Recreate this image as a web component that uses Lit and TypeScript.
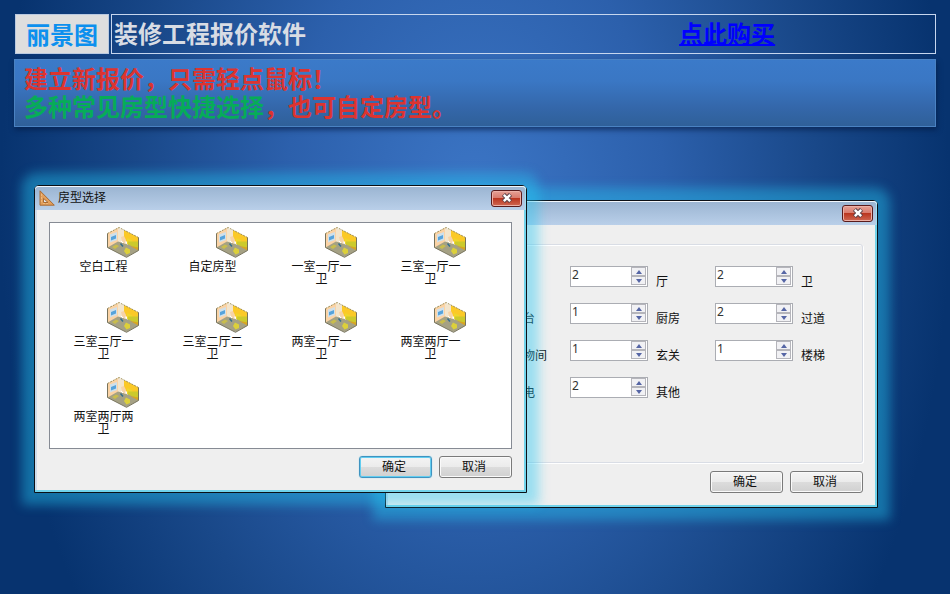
import { LitElement, html, css, nothing } from "lit";
import { customElement, property } from "lit/decorators.js";
import { classMap } from "lit/directives/class-map.js";

const ROOM_TYPES = [
  "空白工程",
  "自定房型",
  "一室一厅一卫",
  "三室一厅一卫",
  "三室二厅一卫",
  "三室二厅二卫",
  "两室一厅一卫",
  "两室两厅一卫",
  "两室两厅两卫",
];

const ROOM_COUNTS = [
  { label: "室", value: 2 },
  { label: "厅", value: 2 },
  { label: "卫", value: 2 },
  { label: "阳台", value: 1 },
  { label: "厨房", value: 1 },
  { label: "过道", value: 2 },
  { label: "储物间", value: 1 },
  { label: "玄关", value: 1 },
  { label: "楼梯", value: 1 },
  { label: "水电", value: 1 },
  { label: "其他", value: 2 },
];

const roomIcon = html`<svg class="room" viewBox="0 0 32 31" width="32" height="31" aria-hidden="true">
  <path d="M0.5 6.5 12 0.5 12 15 0.5 21Z" fill="#fbd3a5" />
  <path d="M11 1 18 4 18 17 11 15Z" fill="#f3e5cc" />
  <path d="M17 3 31.5 10.5 31.5 16 20 15 17 12Z" fill="#fbc927" />
  <path d="M20 11 25 13 26 19 20 17Z" fill="#f0d62c" />
  <path d="M21 14.500 31.5 14.500 31.5 21.500 21 18.500Z" fill="#ccca2c" />
  <path d="M0.5 20.5 11 14.5 18 16.5 31.5 21.5 31.5 23.5 19.5 30Z" fill="#a5a184" />
  <path d="M23 19 31.5 20.500 31.5 23.5Z" fill="#d9a520" />
  <path d="M3 7.500 10 5 10 13 3 15.500Z" fill="#cfe0ea" />
  <path d="M4 10 9 8 9 11.500 4 13.500Z" fill="#56a3dc" />
  <path d="M14 10 17 9 19 13 18 17 15 14Z" fill="#f6d3a8" />
  <path d="M13.5 16.500 16 19.500" stroke="#356f8d" stroke-width="1.500" />
  <path d="M14 14 16 16" stroke="#fff" stroke-width="1" />
  <path d="M5 20 9 17.5 12 19 8 22Z" fill="#c9bd4c" />
  <path d="M17 24 19 20.5 23 22.5 23 26 19.5 27.5Z" fill="#dcd03a" />
  <path d="M0.5 6.5 12 0.5 31.5 10.5" fill="none" stroke="#a08f55" stroke-dasharray="2 1" />
  <path d="M0.5 6.5V20.5L19.5 30.3 31.5 23.5V10.5" fill="none" stroke="#77735c" />
</svg>`;

const rulerIcon = html`<svg class="ruler" viewBox="0 0 16 16" width="16" height="16" aria-hidden="true">
  <path d="M1 .8 15.3 15.2H1Z" fill="#e3a05d" stroke="#a86b35" stroke-width="1" />
  <path d="M4.5 8.3 9 12.5H4.5Z" fill="#dfe6ee" stroke="#a86b35" />
  <path d="M2 5h1M2 8h1M2 11h1M5 14v-1M8 14v-1" stroke="#f8d2a0" />
</svg>`;

const controls = css`
  button {
    font: inherit;
    color: inherit;
    margin: 0;
    padding: 0;
  }
  .push {
    width: 73px;
    height: 22px;
    padding-right: 3px;
    border: 1px solid #7a7a7a;
    border-radius: 3px;
    background: linear-gradient(#f4f4f4, #ebebeb 50%, #dcdcdc 51%, #d0d0d0);
    box-shadow: inset 0 0 0 1px #fafafa;
    line-height: 18px;
  }
  .push.primary {
    border-color: #3f93c0;
    box-shadow: inset 0 0 0 1px #62cdf0, 0 0 1px #62cdf0;
  }
`;

@customElement("dialog-window")
class DialogWindow extends LitElement {
  @property() heading = "";

  static styles = css`
    :host {
      display: block;
      box-sizing: border-box;
      border: 1px solid #0b1016;
      border-radius: 5px 5px 0 0;
      background: #efefef;
      box-shadow: 0 0 11px 12px rgba(38, 200, 242, 0.42);
    }
    .frame {
      border-radius: 4px 4px 0 0;
      box-shadow: inset -2px -2px 0 #72d3ea, inset 2px 0 0 #cfdcea;
      padding-bottom: 14px;
    }
    .title {
      display: flex;
      align-items: center;
      gap: 3px;
      height: 24px;
      padding: 0 4px;
      border-radius: 4px 4px 0 0;
      background: linear-gradient(#9ab4d1, #b9cfe9);
      box-shadow: inset 0 1px 0 #f2f7fc, inset -1px 0 0 #9be0f2;
    }
    .text {
      flex: 1;
      font-size: 12px;
      line-height: 16px;
    }
    .ruler {
      display: block;
    }
    .close {
      display: grid;
      place-items: center;
      width: 31px;
      height: 17px;
      padding: 0;
      border: 1px solid #591b1c;
      border-radius: 3px;
      background: linear-gradient(#e5a196, #d9796b 48%, #bb3620 50%, #cf6752);
      box-shadow: inset 0 0 0 1px #ecb0a6;
    }
    .body {
      padding: 0 14px;
    }
  `;

  render() {
    return html`<section class="frame">
      <header class="title">
        ${this.heading ? rulerIcon : nothing}
        <span class="text">${this.heading}</span>
        <button class="close" aria-label="关闭">
          <svg viewBox="0 0 12 10" width="12" height="10" aria-hidden="true">
            <path d="M2.5 1.5 9.5 8.5M9.5 1.5 2.5 8.5" stroke="#5b4249" stroke-width="4.4" />
            <path d="M2.8 1.8 9.2 8.2M9.2 1.8 2.8 8.2" stroke="#fff" stroke-width="2.4" />
          </svg>
        </button>
      </header>
      <div class="body"><slot></slot></div>
    </section>`;
  }
}

@customElement("count-field")
class CountField extends LitElement {
  @property() label = "";
  @property({ type: Number }) value = 0;

  static styles = css`
    :host {
      display: flex;
      gap: 8px;
      height: 22px;
    }
    .box {
      display: flex;
      box-sizing: border-box;
      width: 78px;
      height: 21px;
      border: 1px solid #abadb3;
      background: #fff;
    }
    .value {
      flex: 1;
      min-width: 0;
      height: 16px;
      padding: 0 1px;
      border: 0;
      outline: 0;
      background: none;
      font: 12px/16px "Noto Sans", sans-serif;
      color: #333;
    }
    .spin {
      display: grid;
      grid-template-rows: 9px 9px;
      width: 15px;
      padding: 0 1px;
    }
    .step {
      display: grid;
      place-items: center;
      padding: 0;
      border: 1px solid #b5b5bb;
      background: #f1f1f4;
    }
    .name {
      padding-top: 8px;
      font-size: 12px;
      line-height: 16px;
      white-space: nowrap;
    }
  `;

  private step(by: number) {
    this.value = Math.max(0, this.value + by);
  }

  render() {
    return html`<div class="box">
        <input class="value" id="count" inputmode="numeric" .value=${String(this.value)} />
        <div class="spin">
          <button class="step" aria-label="增加" @click=${() => this.step(1)}>
            <svg viewBox="0 0 6 4" width="6" height="4"><path d="M0 4 3 0 6 4Z" fill="#5565a5" /></svg>
          </button>
          <button class="step" aria-label="减少" @click=${() => this.step(-1)}>
            <svg viewBox="0 0 6 4" width="6" height="4"><path d="M0 0 3 4 6 0Z" fill="#5565a5" /></svg>
          </button>
        </div>
      </div>
      <label class="name" for="count">${this.label}</label>`;
  }
}

@customElement("app-root")
class AppRoot extends LitElement {
  static styles = [
    controls,
    css`
      :host {
        display: flex;
        flex-direction: column;
        box-sizing: border-box;
        min-height: 100vh;
        padding: 14px;
        overflow: hidden;
        font-family: "Liberation Sans", "Noto Sans CJK SC", sans-serif;
        font-size: 12px;
        color: #111;
        background: radial-gradient(ellipse 50% 120% at 50% 35%, #3c76c6 0%, #2c60ac 40%, #194889 72%, #07336f 100%);
      }
      .top {
        display: flex;
        gap: 2px;
        font-size: 24px;
        font-weight: 700;
        line-height: 34px;
      }
      .brand {
        box-sizing: border-box;
        margin-left: 1px;
        padding: 4px 10px 0;
        border: 1px solid #b9c9e0;
        background: #dedede;
        color: #0c90ee;
      }
      .bar {
        flex: 1;
        display: grid;
        grid-template-columns: 69fr 31fr;
        padding: 3px 2px 0;
        border: 1px solid #c6d6ee;
        color: #d8dce4;
      }
      .product {
        margin: 0;
        font-size: inherit;
      }
      .buy {
        justify-self: start;
        color: #00f;
        text-decoration-thickness: 2px;
      }
      .banner {
        margin-top: 5px;
        padding: 6px 9px 4px;
        border: 1px solid #4a82c2;
        background: linear-gradient(#3b7ac9, #3a77c4 32%, #3467aa 72%, #2f6099);
        box-shadow: 1px 3px 5px rgba(3, 25, 65, 0.6);
        font-size: 24px;
        font-weight: 700;
        line-height: 28px;
        color: #dc3430;
      }
      .line {
        margin: 0;
      }
      .green {
        color: #06ac58;
      }
      .desktop {
        position: relative;
        flex: 1;
        min-height: 400px;
      }
      .win {
        position: absolute;
        width: 493px;
      }
      .custom {
        left: 371px;
        top: 73px;
      }
      .picker {
        left: 20px;
        top: 58px;
      }
      .rooms {
        display: grid;
        grid-template-columns: repeat(4, 109px);
        grid-auto-rows: 75px;
        box-sizing: border-box;
        height: 227px;
        margin: 12px 0 7px;
        padding: 4px 0 0;
        border: 1px solid #868b94;
        background: #fff;
        list-style: none;
      }
      .item {
        display: flex;
        flex-direction: column;
        align-items: center;
        gap: 3px;
        width: 107px;
        border: 0;
        background: none;
      }
      .room {
        margin-left: 38px;
      }
      .caption {
        width: 66px;
        line-height: 12px;
        text-align: center;
      }
      .actions {
        display: flex;
        justify-content: flex-end;
        gap: 7px;
      }
      .group {
        display: grid;
        grid-template-columns: repeat(3, 145px);
        grid-auto-rows: 37px;
        box-sizing: border-box;
        min-width: 0;
        height: 219px;
        margin: 19px 0 8px;
        padding: 21px 0 0 24px;
        border: 1px solid #d9dde5;
        border-radius: 3px;
        box-shadow: inset 1px 1px 0 #fff, 1px 1px 0 #fff;
      }
    `,
  ];

  private actions(primary: boolean) {
    return html`<div class="actions">
      <button class=${classMap({ push: true, primary })}>确定</button>
      <button class="push">取消</button>
    </div>`;
  }

  render() {
    return html`
      <header class="top">
        <div class="brand">丽景图</div>
        <div class="bar">
          <h1 class="product">装修工程报价软件</h1>
          <a class="buy" href="#buy">点此购买</a>
        </div>
      </header>
      <section class="banner">
        <p class="line">建立新报价，只需轻点鼠标！</p>
        <p class="line"><span class="green">多种常见房型快捷选择</span>，也可自定房型。</p>
      </section>
      <main class="desktop">
        <dialog-window class="win custom">
          <fieldset class="group">
            ${ROOM_COUNTS.map((r) => html`<count-field label=${r.label} value=${r.value}></count-field>`)}
          </fieldset>
          ${this.actions(false)}
        </dialog-window>
        <dialog-window class="win picker" heading="房型选择">
          <ul class="rooms">
            ${ROOM_TYPES.map(
              (name) => html`<li><button class="item">${roomIcon}<span class="caption">${name}</span></button></li>`
            )}
          </ul>
          ${this.actions(true)}
        </dialog-window>
      </main>
    `;
  }
}
